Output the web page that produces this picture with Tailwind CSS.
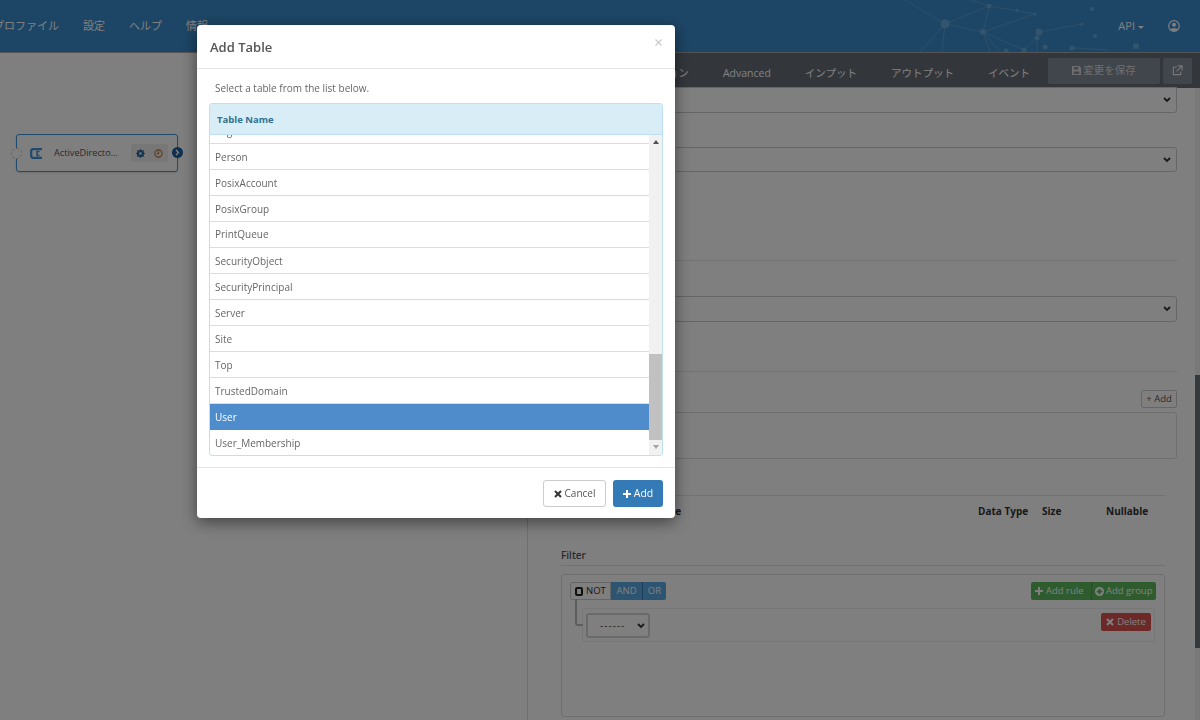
<!DOCTYPE html>
<html lang="ja">
<head>
    <meta charset="UTF-8">
    <meta name="viewport" content="width=device-width, initial-scale=1.0">
    <title>Add Table</title>
    <script src="https://cdn.jsdelivr.net/npm/@tailwindcss/browser@4"></script>
</head>
<body class="h-[720px] overflow-hidden bg-white font-['Open_Sans','Noto_Sans_CJK_JP',sans-serif] text-[#333]">
    <!-- Header -->
    <header class="relative h-[53px] bg-[#3b8ccc] border-b border-[#aaa] flex items-center overflow-hidden text-white text-[11px]">
        <nav class="flex items-center gap-[24px] ml-[-7px]">
            <span>プロファイル</span>
            <span>設定</span>
            <span>ヘルプ</span>
            <span>情報</span>
        </nav>
        <svg class="absolute left-[900px] top-0 opacity-35" width="240" height="52" viewBox="0 0 240 52" fill="none" stroke="#b5dcf5" stroke-width="0.7">
            <path d="M45 24L89 6L83 32L45 24M89 6L135 14L83 32L124 50M83 32L100 52M83 32L90 52M137 38L124 50M137 38L137 52M139 32L182 24M172 48L210 50M45 24L20 52M45 24L42 52M45 24L5 0M89 6L55 -5"/>
            <g fill="#b5dcf5" stroke="none">
                <circle cx="45" cy="24" r="4.5"/><circle cx="89" cy="6" r="2.5"/><circle cx="83" cy="32" r="3"/><circle cx="135" cy="14" r="1.5"/><circle cx="139" cy="32" r="3.5"/><circle cx="137" cy="38" r="2.5"/><circle cx="124" cy="50" r="2.5"/><circle cx="172" cy="48" r="2.5"/><circle cx="182" cy="24" r="1.5"/><circle cx="192" cy="9" r="2"/><circle cx="195" cy="36" r="2"/><circle cx="236" cy="46" r="3"/><circle cx="145" cy="47" r="2.5"/><circle cx="106" cy="51" r="2.5"/><circle cx="117" cy="10" r="1.5"/>
            </g>
        </svg>
        <div class="ml-auto mr-[20px] flex items-center gap-[24px]">
            <span class="flex items-center gap-[3px] text-[11px]">API
                <span class="mt-[2px] border-x-[3px] border-t-[3px] border-x-transparent border-t-white"></span>
            </span>
            <svg width="12" height="12" viewBox="0 0 12 12" fill="none"><circle cx="6" cy="6" r="5.3" stroke="#fff" stroke-width="1.2"/><circle cx="6" cy="4.7" r="2" fill="#fff"/><path d="M2.5 9.6C3.2 7.8 8.8 7.8 9.5 9.6L6 11.2Z" fill="#fff"/></svg>
        </div>
    </header>

    <main class="flex h-[667px]">
        <!-- Canvas -->
        <section class="relative w-[528px] shrink-0 border-r border-[#ddd]">
            <div class="absolute left-[16px] top-[81px] w-[162px] h-[38px] rounded-[3px] border border-[#3f94dc] bg-white flex items-center shadow-sm">
                <span class="absolute left-[-6px] top-[13px] w-[11px] h-[11px] rounded-full border border-dashed border-[#ccc] bg-white"></span>
                <svg class="ml-[13px]" width="12" height="11" viewBox="0 0 12 11" fill="none" stroke="#3f94dc"><path d="M12 1.2H2.4L1.2 2.4V8.6L2.4 9.8H12" stroke-width="2.2"/><path d="M9.5 3.5H7V7.5H9.5" stroke-width="1.5"/></svg>
                <span class="ml-[12px] text-[9.2px] leading-none text-[#555]">ActiveDirecto...</span>
                <span class="ml-auto mr-[9px] w-[37px] h-[18px] rounded-[2px] bg-[#eee] flex items-center justify-center gap-[9px]">
                    <svg width="9" height="9" viewBox="0 0 10 10"><circle cx="5" cy="5" r="3" fill="none" stroke="#2a6aa8" stroke-width="2"/><path d="M5 0V10M0 5H10M1.5 1.5L8.5 8.5M8.5 1.5L1.5 8.5" stroke="#2a6aa8" stroke-width="1.2"/><circle cx="5" cy="5" r="1.4" fill="#eee"/></svg>
                    <svg width="9" height="9" viewBox="0 0 10 10" fill="none" stroke="#b5703a" stroke-width="1.2"><circle cx="5" cy="5" r="4"/><path d="M5 2.5V5.3H3"/></svg>
                </span>
                <span class="absolute right-[-6px] top-[12px] w-[11px] h-[11px] rounded-full bg-[#1e5fa3] flex items-center justify-center">
                    <svg width="5" height="7" viewBox="0 0 5 7" fill="none" stroke="#fff" stroke-width="1.4"><path d="M1 1L3.5 3.5L1 6"/></svg>
                </span>
            </div>
        </section>

        <!-- Properties -->
        <section class="relative flex-1 min-w-0 flex flex-col overflow-hidden">
            <div class="h-[35px] shrink-0 bg-[#676f78] flex items-center justify-end pr-[8px] text-white text-[10.5px]">
                <div class="flex items-center gap-[34px] mr-[18px] pt-[7px]">
                    <span>オプション</span>
                    <span>Advanced</span>
                    <span>インプット</span>
                    <span>アウトプット</span>
                    <span>イベント</span>
                </div>
                <span class="w-[112px] h-[26px] rounded-[2px] bg-[#808c98] flex items-center justify-center gap-[2px] text-[10.5px] text-[#ddd]">
                    <svg width="9" height="9" viewBox="0 0 10 10" fill="#ddd"><path d="M0 0H8L10 2V10H0ZM2 1V4H7V1ZM2 6V9H8V6Z"/></svg>
                    変更を保存
                </span>
                <span class="ml-[3px] w-[29px] h-[26px] rounded-[2px] bg-[#808c98] flex items-center justify-center">
                    <svg width="11" height="11" viewBox="0 0 12 12" fill="none" stroke="#eee" stroke-width="1.2"><path d="M9.5 7V10.5H1.5V2.5H5M6 1H11V6M11 1L5 7"/></svg>
                </span>
            </div>

            <div class="pl-[33px] pr-[23px] flex flex-col">
                <div class="h-[26px] -mt-[1px] border border-[#ccc] rounded-[3px] rounded-t-none bg-white flex items-center justify-end pr-[5px]">
                    <svg width="8" height="6" viewBox="0 0 8 6" fill="none" stroke="#333" stroke-width="1.8"><path d="M1 1L4 4L7 1"/></svg>
                </div>
                <div class="h-[25px] mt-[34px] border border-[#ccc] rounded-[3px] bg-white flex items-center justify-end pr-[5px]">
                    <svg width="8" height="6" viewBox="0 0 8 6" fill="none" stroke="#333" stroke-width="1.8"><path d="M1 1L4 4L7 1"/></svg>
                </div>
                <div class="h-px mt-[88px] bg-[#e5e5e5]"></div>
                <div class="h-[26px] mt-[35px] border border-[#ccc] rounded-[3px] bg-white flex items-center justify-end pr-[5px]">
                    <svg width="8" height="6" viewBox="0 0 8 6" fill="none" stroke="#333" stroke-width="1.8"><path d="M1 1L4 4L7 1"/></svg>
                </div>
                <div class="h-px mt-[49px] bg-[#e5e5e5]"></div>
                <div class="flex justify-end mt-[18px]">
                    <span class="w-[36px] h-[18px] border border-[#ccc] rounded-[2px] bg-white flex items-center justify-center text-[9.5px] text-[#555]">+ Add</span>
                </div>
                <div class="h-[47px] mt-[4px] border border-[#ddd] rounded-[3px] bg-white"></div>
            </div>

            <div class="ml-[33px] mr-[35px] mt-[36px] border-t border-[#e5e5e5] h-[32px] flex items-center text-[10px] font-bold text-[#333] relative">
                <span class="absolute left-[49px]">Column Name</span>
                <span class="absolute left-[417px]">Data Type</span>
                <span class="absolute left-[481px]">Size</span>
                <span class="absolute left-[545px]">Nullable</span>
            </div>

            <div class="ml-[33px] mr-[35px] mt-[22px]">
                <div class="h-[17px] pt-[1px] border-b border-[#e5e5e5] text-[10px] font-semibold text-[#555] leading-[11px]">Filter</div>
                <div class="relative mt-[8px] h-[143px] border border-[#ddd] rounded-[3px] bg-white px-[8px] pt-[7px]">
                    <div class="flex justify-between items-center">
                        <div class="flex h-[18px] rounded-[2px] overflow-hidden text-[9.5px] leading-[18px]">
                            <span class="bg-[#fff] border border-[#ccc] rounded-l-[2px] text-[#333] flex items-center gap-[3px] pl-[4px] pr-[4px] w-[41px]">
                                <span class="w-[8px] h-[9px] border-2 border-[#222] rounded-[2px] shrink-0"></span>NOT
                            </span>
                            <span class="bg-[#5ba8e0] text-white w-[32px] text-center border-r border-[#3f7fb5]">AND</span>
                            <span class="bg-[#5ba8e0] text-white w-[23px] text-center">OR</span>
                        </div>
                        <div class="flex h-[18px] w-[125px] rounded-[2px] overflow-hidden bg-[#5cb85c] text-white text-[9.5px]">
                            <span class="flex items-center gap-[3px] px-[4px] w-[61px] border-r border-[#4a9c4a]">
                                <svg width="8" height="8" viewBox="0 0 8 8" fill="#fff"><path d="M3 0H5V3H8V5H5V8H3V5H0V3H3Z"/></svg>Add rule
                            </span>
                            <span class="flex items-center gap-[2px] px-[3px]">
                                <svg width="9" height="9" viewBox="0 0 10 10"><circle cx="5" cy="5" r="5" fill="#fff"/><path d="M4 2H6V4H8V6H6V8H4V6H2V4H4Z" fill="#5cb85c"/></svg>Add group
                            </span>
                        </div>
                    </div>
                    <div class="absolute left-[13px] top-[24px] w-[8px] h-[27px] border-l-2 border-b-2 border-[#bbb] rounded-bl-[3px]"></div>
                    <div class="ml-[12px] mt-[8px] mr-[1px] h-[34px] border border-[#eee] rounded-[3px] bg-white flex justify-between items-start pt-[4px] pl-[3px] pr-[3px]">
                        <div class="w-[64px] h-[25px] border-2 border-[#d4d4d4] rounded-[3px] flex items-center justify-between pl-[12px] pr-[3px] text-[10px] tracking-[1px] text-[#555] bg-white">
                            <span>------</span>
                            <svg width="8" height="6" viewBox="0 0 8 6" fill="none" stroke="#333" stroke-width="1.8"><path d="M1 1L4 4L7 1"/></svg>
                        </div>
                        <span class="w-[50px] h-[18px] rounded-[2px] bg-[#d9534f] text-white text-[9.5px] flex items-center justify-center gap-[3px]">
                            <svg width="8" height="8" viewBox="0 0 8 8" stroke="#fff" stroke-width="2"><path d="M1 1L7 7M7 1L1 7"/></svg>Delete
                        </span>
                    </div>
                </div>
            </div>

            <!-- Page scrollbar -->
            <div class="absolute right-0 top-[35px] bottom-0 w-[5px] bg-[#f3f3f3]">
                <div class="mt-[287px] h-[273px] bg-[#6b7378]"></div>
            </div>
        </section>
    </main>

    <!-- Backdrop -->
    <div class="fixed inset-0 bg-black/50"></div>

    <!-- Modal -->
    <div class="fixed left-[197px] top-[25px] w-[478px] h-[493px] bg-white rounded-[4px] shadow-[0_4px_16px_rgba(0,0,0,0.5)] flex flex-col text-[#555]">
        <div class="h-[44px] shrink-0 border-b border-[#e5e5e5] flex items-center justify-between pl-[13px] pr-[13px]">
            <h2 class="text-[13px] font-semibold text-[#555] pt-[3px]">Add Table</h2>
            <svg class="mb-[8px]" width="7" height="7" viewBox="0 0 7 7" stroke="#ccc" stroke-width="1.4"><path d="M0.5 0.5L6.5 6.5M6.5 0.5L0.5 6.5"/></svg>
        </div>
        <div class="h-[399px] shrink-0 border-b border-[#e5e5e5] pt-[12px] px-[12px]">
            <p class="pl-[6px] text-[10px] leading-[14px] text-[#666]">Select a table from the list below.</p>
            <div class="mt-[8px] h-[353px] border border-[#bfe0f2] rounded-[3px] overflow-hidden flex flex-col">
                <div class="h-[31px] pt-[2px] shrink-0 bg-[#d9edf7] border-b border-[#bfe0f2] flex items-center pl-[7px] text-[9.5px] font-bold text-[#31708f]">Table Name</div>
                <div class="flex-1 flex min-h-0">
                    <div class="flex-1 overflow-hidden text-[10px] text-[#666]">
                        <div class="-mt-[17px]">
                            <div class="h-[26px] pt-[2px] border-b border-[#ddd] flex items-center pl-[5px]">Organization</div>
                            <div class="h-[26px] pt-[2px] border-b border-[#ddd] flex items-center pl-[5px]">Person</div>
                            <div class="h-[26px] pt-[2px] border-b border-[#ddd] flex items-center pl-[5px]">PosixAccount</div>
                            <div class="h-[26px] pt-[2px] border-b border-[#ddd] flex items-center pl-[5px]">PosixGroup</div>
                            <div class="h-[26px] border-b border-[#ddd] flex items-center pl-[5px]">PrintQueue</div>
                            <div class="h-[26px] pt-[2px] border-b border-[#ddd] flex items-center pl-[5px]">SecurityObject</div>
                            <div class="h-[26px] pt-[2px] border-b border-[#ddd] flex items-center pl-[5px]">SecurityPrincipal</div>
                            <div class="h-[26px] pt-[2px] border-b border-[#ddd] flex items-center pl-[5px]">Server</div>
                            <div class="h-[26px] pt-[2px] border-b border-[#ddd] flex items-center pl-[5px]">Site</div>
                            <div class="h-[26px] pt-[2px] border-b border-[#ddd] flex items-center pl-[5px]">Top</div>
                            <div class="h-[26px] pt-[2px] border-b border-[#ddd] flex items-center pl-[5px]">TrustedDomain</div>
                            <div class="h-[26px] bg-[#4f8ccb] text-white flex items-center pl-[5px]">User</div>
                            <div class="h-[26px] flex items-center pl-[5px]">User_Membership</div>
                        </div>
                    </div>
                    <div class="w-[13px] shrink-0 bg-[#f1f1f1] flex flex-col">
                        <div class="h-[13px] flex items-center justify-center"><span class="border-x-[3px] border-b-[4px] border-x-transparent border-b-[#505050]"></span></div>
                        <div class="mt-[206px] h-[86px] bg-[#c1c1c1]"></div>
                        <div class="h-[13px] flex items-center justify-center"><span class="border-x-[3px] border-t-[4px] border-x-transparent border-t-[#a3a3a3]"></span></div>
                    </div>
                </div>
            </div>
        </div>
        <div class="flex-1 flex items-start justify-end gap-[7px] pt-[12px] pr-[12px]">
            <span class="w-[63px] h-[27px] border border-[#ccc] rounded-[3px] bg-white flex items-center justify-center gap-[3px] text-[10px] text-[#555]">
                <svg width="8" height="8" viewBox="0 0 8 8" stroke="#333" stroke-width="2"><path d="M1 1L7 7M7 1L1 7"/></svg>Cancel
            </span>
            <span class="w-[50px] h-[27px] rounded-[3px] bg-[#337ab7] flex items-center justify-center gap-[3px] text-[10.5px] text-white">
                <svg width="8" height="8" viewBox="0 0 8 8" fill="#fff"><path d="M3 0H5V3H8V5H5V8H3V5H0V3H3Z"/></svg>Add
            </span>
        </div>
    </div>
</body>
</html>
